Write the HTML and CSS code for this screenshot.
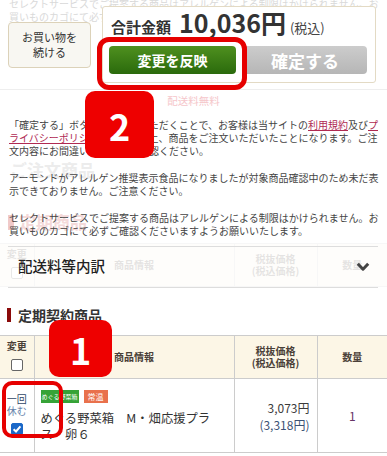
FILE: index.html
```html
<!DOCTYPE html>
<html lang="ja">
<head>
    <meta charset="UTF-8">
    <meta name="viewport" content="width=device-width, initial-scale=1.0">
    <title>ご注文内容の確認</title>
    <link rel="stylesheet" href="styles.css">
</head>
<body>
    <div class="page">
        <!-- 後ろに透けて見えるスクロール前の内容 -->
        <div class="ghost ghost-top">セレクトサービスでご提案する商品はアレルゲンによる制限はかけられません。お買いものカゴにて必ずご確認くださいますようお願いいたします。</div>
        <div class="ghost ghost-order">ご注文商品</div>
        <div class="ghost ghost-teiki">定期商品</div>
        <table class="items ghost ghost-table">
            <tr class="head">
                <th class="col-chg"><div>変更</div><span class="cb"></span></th>
                <th class="col-info">商品情報</th>
                <th class="col-price">税抜価格<br>(税込価格)</th>
                <th class="col-qty">数量</th>
            </tr>
        </table>

        <!-- 固定ヘッダー -->
        <div class="topbar">
            <button class="btn-continue">お買い物を<br>続ける</button>
            <div class="total-box">
                <div class="total-row">
                    <span class="total-label">合計金額</span>
                    <span class="total-price">10,036円</span>
                    <span class="total-tax">(税込)</span>
                </div>
                <div class="total-btns">
                    <button class="btn-apply">変更を反映</button>
                    <button class="btn-confirm">確定する</button>
                </div>
            </div>
        </div>
        <div class="freeship">配送料無料</div>

        <div class="notes">
            <p>「確定する」ボタンを押していただくことで、お客様は当サイトの<a href="#">利用規約</a>及び<a href="#">プライバシーポリシー</a>にご同意の上、商品をご注文いただいたことになります。ご注文内容にお間違いがないかご確認ください。</p>
            <p>アーモンドがアレルゲン推奨表示食品になりましたが対象商品確認中のため未だ表示できておりません。ご注意ください。</p>
            <p>セレクトサービスでご提案する商品はアレルゲンによる制限はかけられません。お買いものカゴにて必ずご確認くださいますようお願いいたします。</p>
        </div>

        <!-- 配送料等内訳 -->
        <div class="fee-acc">
            <span class="fee-title">配送料等内訳</span>
            <svg class="chevron" width="14" height="10" viewBox="0 0 14 10">
                <polyline points="1.8,1.8 7,7.2 12.2,1.8" fill="none" stroke="#444" stroke-width="3" stroke-linejoin="round"/>
            </svg>
        </div>

        <h3 class="sec-title">定期契約商品</h3>

        <table class="items">
            <tr class="head">
                <th class="col-chg"><div>変更</div><span class="cb"></span></th>
                <th class="col-info">商品情報</th>
                <th class="col-price">税抜価格<br>(税込価格)</th>
                <th class="col-qty">数量</th>
            </tr>
            <tr class="row">
                <td class="col-chg">
                    <div class="skip">一回</div>
                    <div class="skip skip-2">休む</div>
                    <span class="cb checked">
                        <svg width="12" height="12" viewBox="0 0 12 12">
                            <polyline points="2.6,6.2 5,8.5 9.4,3.4" fill="none" stroke="#fff" stroke-width="2"/>
                        </svg>
                    </span>
                </td>
                <td class="col-info">
                    <div class="tags">
                        <span class="tag tag-green">めぐる野菜箱</span>
                        <span class="tag tag-orange">常温</span>
                    </div>
                    <div class="item-name">めぐる野菜箱　M・畑応援プラス・卵６</div>
                </td>
                <td class="col-price">
                    <div>3,073円</div>
                    <div class="incl">(3,318円)</div>
                </td>
                <td class="col-qty"><span class="qty">1</span></td>
            </tr>
        </table>

        <!-- 説明用の注釈 -->
        <div class="mark mark-apply"></div>
        <div class="badge badge-2">2</div>
        <div class="mark mark-rest"></div>
        <div class="badge badge-1">1</div>
    </div>
</body>
</html>
```

FILE: styles.css
```css
* {
    margin: 0;
    padding: 0;
    box-sizing: border-box;
}

html {
    background: #fff;
}

body {
    font-family: "Noto Sans CJK JP", "Noto Sans", sans-serif;
    color: #444;
    width: 387px;
    overflow: hidden;
}

.page {
    position: relative;
    width: 387px;
    height: 456px;
    overflow: hidden;
}

button {
    font-family: inherit;
    cursor: pointer;
}

/* 透けて見える内容 */
.ghost {
    position: absolute;
    z-index: -1;
}

.ghost-top {
    top: -3px;
    left: 9px;
    width: 371px;
    font-size: 10px;
    line-height: 13px;
    color: #d9d9d9;
}

.ghost-order {
    top: 161px;
    left: 10px;
    font-size: 17px;
    line-height: 18px;
    font-weight: 700;
    color: #ececec;
}

.ghost-teiki {
    top: 213px;
    left: 8px;
    font-size: 17px;
    line-height: 18px;
    font-weight: 700;
    color: #f4d9d9;
    display: flex;
    align-items: center;
    gap: 5px;
}

.ghost-teiki::before {
    content: "";
    width: 6px;
    height: 15px;
    background: #f0caca;
}

.ghost-table {
    top: 243px;
    left: 0;
    opacity: 0.14;
}

/* 固定ヘッダー */
.topbar {
    display: flex;
    align-items: center;
    gap: 11px;
    height: 90px;
    padding-left: 8px;
    border-bottom: 1px solid #eee;
}

.btn-continue {
    width: 83px;
    height: 46px;
    background: #f8f7f2;
    border: 1px solid #dcd2b9;
    border-radius: 4px;
    font-size: 11px;
    line-height: 15px;
    color: #333;
}

.total-box {
    width: 274px;
    height: 77px;
    background: #fff;
    border: 1px solid #e3dac4;
    border-radius: 3px;
    padding: 0 8px 8px 6px;
    display: flex;
    flex-direction: column;
    justify-content: flex-end;
}

.total-row {
    display: flex;
    align-items: baseline;
    height: 36px;
    padding-left: 2px;
    margin-bottom: 3px;
    color: #333;
    line-height: 30px;
}

.total-label {
    font-size: 15px;
    font-weight: 700;
}

.total-price {
    font-size: 25px;
    font-weight: 700;
    margin-left: 8px;
}

.total-tax {
    font-size: 13px;
    margin-left: 4px;
    color: #444;
}

.total-btns {
    display: flex;
    gap: 7px;
    height: 28px;
}

.btn-apply {
    width: 127px;
    border: none;
    border-radius: 4px;
    background: linear-gradient(#4f901f, #2a6a0c);
    color: #fff;
    font-size: 14px;
    font-weight: 700;
}

.btn-confirm {
    width: 124px;
    border: none;
    border-radius: 4px;
    background: linear-gradient(#cccccc, #b6b6b6);
    color: #fff;
    font-size: 17px;
    font-weight: 700;
}

.freeship {
    height: 28px;
    text-align: center;
    font-size: 10.5px;
    line-height: 22px;
    color: #f5c6ca;
}

/* 注意書き */
.notes {
    padding: 0 7px 0 9px;
}

.notes p {
    font-size: 10px;
    line-height: 13px;
    margin-bottom: 14px;
    color: #444;
}

.notes p:last-child {
    margin-bottom: 9px;
}

.notes a {
    color: #b02a52;
    text-decoration: underline;
}

/* 配送料等内訳 */
.fee-acc {
    display: flex;
    align-items: center;
    justify-content: space-between;
    height: 42px;
    margin: 0 9px 0 8px;
    padding: 0 8px 0 10px;
    border-top: 1px solid #ddd;
    border-bottom: 1px solid #ddd;
}

.fee-title {
    font-size: 14.5px;
    font-weight: 500;
    color: #222;
    margin-top: -3px;
}

.sec-title {
    display: flex;
    align-items: center;
    margin: 18px 0 11px;
    padding-left: 7px;
    height: 18px;
    font-size: 14px;
    font-weight: 700;
    color: #333;
}

.sec-title::before {
    content: "";
    width: 4px;
    height: 14px;
    margin-right: 7px;
    background: #8b0a0a;
}

/* 商品テーブル */
.items {
    width: 387px;
    border-collapse: collapse;
    table-layout: fixed;
}

.items th,
.items td {
    border-top: 1px solid #ccc;
    border-bottom: 1px solid #ccc;
    border-left: 1px solid #ccc;
}

.items th:first-child,
.items td:first-child {
    border-left: none;
}

.items .col-chg { width: 34px; }
.items .col-info { width: 200px; }
.items .col-price { width: 83px; }
.items .col-qty { width: 70px; }

.head th {
    height: 43px;
    background: #fcf6e6;
    font-size: 10px;
    line-height: 12px;
    font-weight: 700;
    color: #4a4038;
    text-align: center;
    vertical-align: middle;
}

.head th.col-chg {
    vertical-align: top;
    padding-top: 4px;
}

.head .cb {
    margin-top: 7px;
}

.cb {
    display: block;
    width: 12px;
    height: 12px;
    margin: 0 auto;
    background: #fff;
    border: 1px solid #666;
    border-radius: 2px;
}

.cb.checked {
    background: #1b68c8;
    border-color: #1b68c8;
    margin-top: 6px;
}

.cb.checked svg {
    display: block;
    margin: -1px;
}

.row td {
    height: 74px;
    vertical-align: middle;
    font-size: 12px;
    color: #333;
}

.row td.col-chg {
    vertical-align: top;
    padding-top: 14px;
    text-align: center;
}

.skip {
    font-size: 10px;
    line-height: 12px;
    color: #2f4666;
}

.skip-2 {
    color: #6683aa;
}

.row td.col-info {
    vertical-align: top;
    padding: 11px 6px 0;
}

.tags {
    display: flex;
    gap: 5px;
}

.tag {
    height: 13px;
    line-height: 13px;
    color: #fff;
    white-space: nowrap;
}

.tag-green {
    width: 38px;
    font-size: 6px;
    text-align: center;
    background: #36a337;
}

.tag-orange {
    width: 24px;
    font-size: 8px;
    text-align: center;
    background: #e9714c;
}

.item-name {
    margin-top: 7px;
    font-size: 12.3px;
    line-height: 16px;
    color: #333;
}

.row td.col-price {
    text-align: right;
    padding-right: 7px;
    line-height: 17px;
    color: #3b3b3b;
}

.incl {
    color: #3d5275;
}

.row td.col-qty {
    text-align: center;
}

.qty {
    color: #663366;
}

/* 注釈 */
.mark {
    position: absolute;
    border: 5px solid #e60000;
    border-radius: 12px;
}

.mark-apply {
    left: 97px;
    top: 37px;
    width: 150px;
    height: 53px;
}

.mark-rest {
    left: 2px;
    top: 381px;
    width: 61px;
    height: 57px;
    border-width: 4px;
    border-radius: 10px;
}

.badge {
    position: absolute;
    display: flex;
    align-items: center;
    justify-content: center;
    background: #ee0000;
    color: #fff;
    font-size: 36px;
    font-weight: 700;
    border-radius: 10px;
}

.badge-2 {
    left: 85px;
    top: 91px;
    width: 69px;
    height: 67px;
}

.badge-1 {
    left: 49px;
    top: 320px;
    width: 63px;
    height: 57px;
}
```
